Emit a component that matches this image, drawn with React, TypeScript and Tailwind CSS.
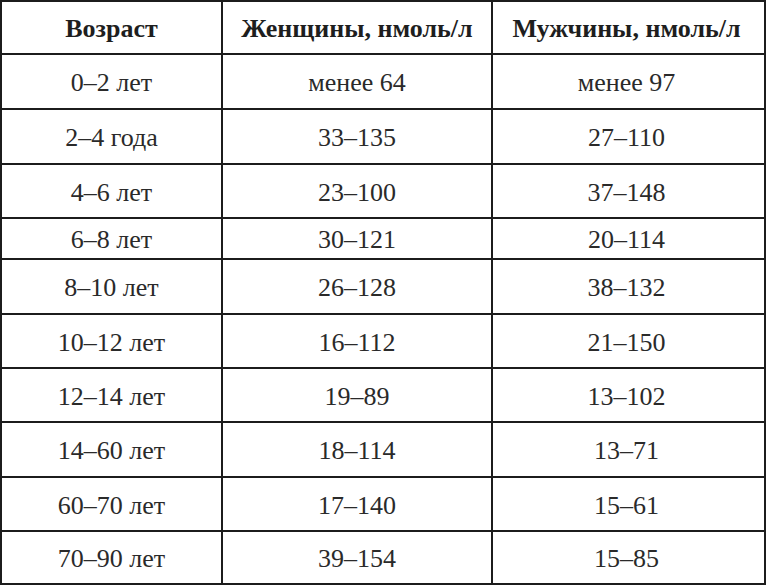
const rows: [string, string, string, number][] = [
  ['0–2 лет', 'менее 64', 'менее 97', 55],
  ['2–4 года', '33–135', '27–110', 55],
  ['4–6 лет', '23–100', '37–148', 54],
  ['6–8 лет', '30–121', '20–114', 41],
  ['8–10 лет', '26–128', '38–132', 55],
  ['10–12 лет', '16–112', '21–150', 54],
  ['12–14 лет', '19–89', '13–102', 54],
  ['14–60 лет', '18–114', '13–71', 55],
  ['60–70 лет', '17–140', '15–61', 54],
  ['70–90 лет', '39–154', '15–85', 53],
];

const cell = "flex items-center justify-center pt-[3px] font-['Tinos','Times_New_Roman','Liberation_Serif',serif] text-[26px] leading-none";

function Row({ cells, height, head }: { cells: string[]; height: number; head?: boolean }) {
  const weight = head ? ' font-bold text-[#1e1e1e]' : ' text-[#2a2a2a]';
  return (
    <div className={head ? 'flex' : 'flex border-t-2 border-[#1c1c1c]'} style={{ height }}>
      <div className={'w-[219px] ' + cell + weight}>{cells[0]}</div>
      <div className={'w-[270px] border-l-2 border-[#1c1c1c] ' + cell + weight}>{cells[1]}</div>
      <div className={'w-[269px] border-l-2 border-[#1c1c1c] ' + cell + weight}>{cells[2]}</div>
    </div>
  );
}

export default function App() {
  return (
    <div className="w-[768px] h-[586px] bg-white">
      <div className="w-[766px] border-2 border-[#1c1c1c]">
        <Row head height={51} cells={['Возраст', 'Женщины, нмоль/л', 'Мужчины, нмоль/л']} />
        {rows.map(r => (
          <Row key={r[0]} height={r[3]} cells={[r[0], r[1], r[2]]} />
        ))}
      </div>
    </div>
  );
}
